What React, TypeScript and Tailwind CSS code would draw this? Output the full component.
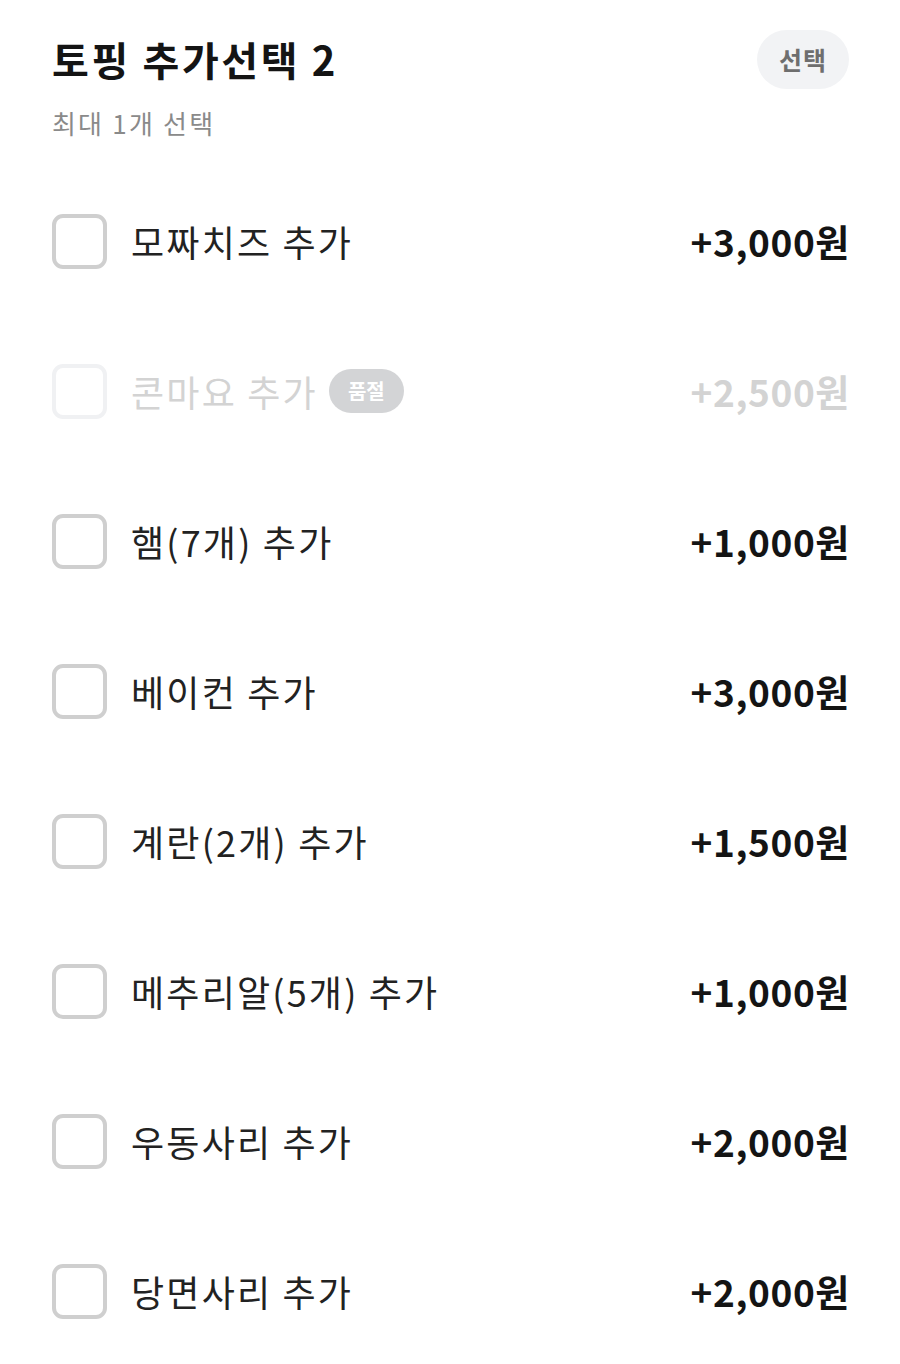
import React from 'react';

type Option = { name: string; price: string; soldOut?: boolean };

const OPTIONS: Option[] = [
  { name: '모짜치즈 추가', price: '+3,000원' },
  { name: '콘마요 추가', price: '+2,500원', soldOut: true },
  { name: '햄(7개) 추가', price: '+1,000원' },
  { name: '베이컨 추가', price: '+3,000원' },
  { name: '계란(2개) 추가', price: '+1,500원' },
  { name: '메추리알(5개) 추가', price: '+1,000원' },
  { name: '우동사리 추가', price: '+2,000원' },
  { name: '당면사리 추가', price: '+2,000원' },
];

export default function App() {
  return (
    <div
      className="w-[900px] min-h-[1364px] bg-white px-[52px] pt-[30px] overflow-hidden"
      style={{ fontFamily: '"Noto Sans CJK KR", "Noto Sans", sans-serif' }}
    >
      {/* Header */}
      <div className="flex items-start justify-between">
        <h2 className="text-[40px] leading-[59px] font-bold text-[#141414] tracking-[2.6px]">토핑 추가선택 2</h2>
        <span className="h-[59px] w-[92px] -mr-[1px] flex items-center justify-center rounded-full bg-[#f2f3f5] text-[25px] font-bold text-[#6e6e6e] tracking-[1px]">
          선택
        </span>
      </div>
      <p className="mt-[16px] text-[26px] leading-[36px] text-[#8a8a8a] tracking-[2.2px]">최대 1개 선택</p>

      {/* Options */}
      <ul className="mt-[25px]">
        {OPTIONS.map(({ name, price, soldOut }) => (
          <li key={name} className="h-[150px] flex items-center justify-between">
            <div className="flex items-center">
              <span
                className={`w-[55px] h-[55px] rounded-[11px] border-[4px] ${
                  soldOut ? 'border-[#f0f1f3]' : 'border-[#cfcfcf]'
                }`}
              />
              <span
                className={`ml-[24px] text-[36px] leading-none tracking-[2.2px] ${
                  soldOut ? 'text-[#d3d3d3]' : 'text-[#222]'
                }`}
              >
                {name}
              </span>
              {soldOut && (
                <span className="ml-[11px] h-[44px] w-[75px] flex items-center justify-center rounded-full bg-[#d3d4d6] text-[20px] font-bold text-white">
                  품절
                </span>
              )}
            </div>
            <span
              className={`-mr-[2px] text-[37px] font-bold leading-none tracking-[0.6px] ${
                soldOut ? 'text-[#d3d3d3]' : 'text-[#141414]'
              }`}
            >
              {price}
            </span>
          </li>
        ))}
      </ul>
    </div>
  );
}
